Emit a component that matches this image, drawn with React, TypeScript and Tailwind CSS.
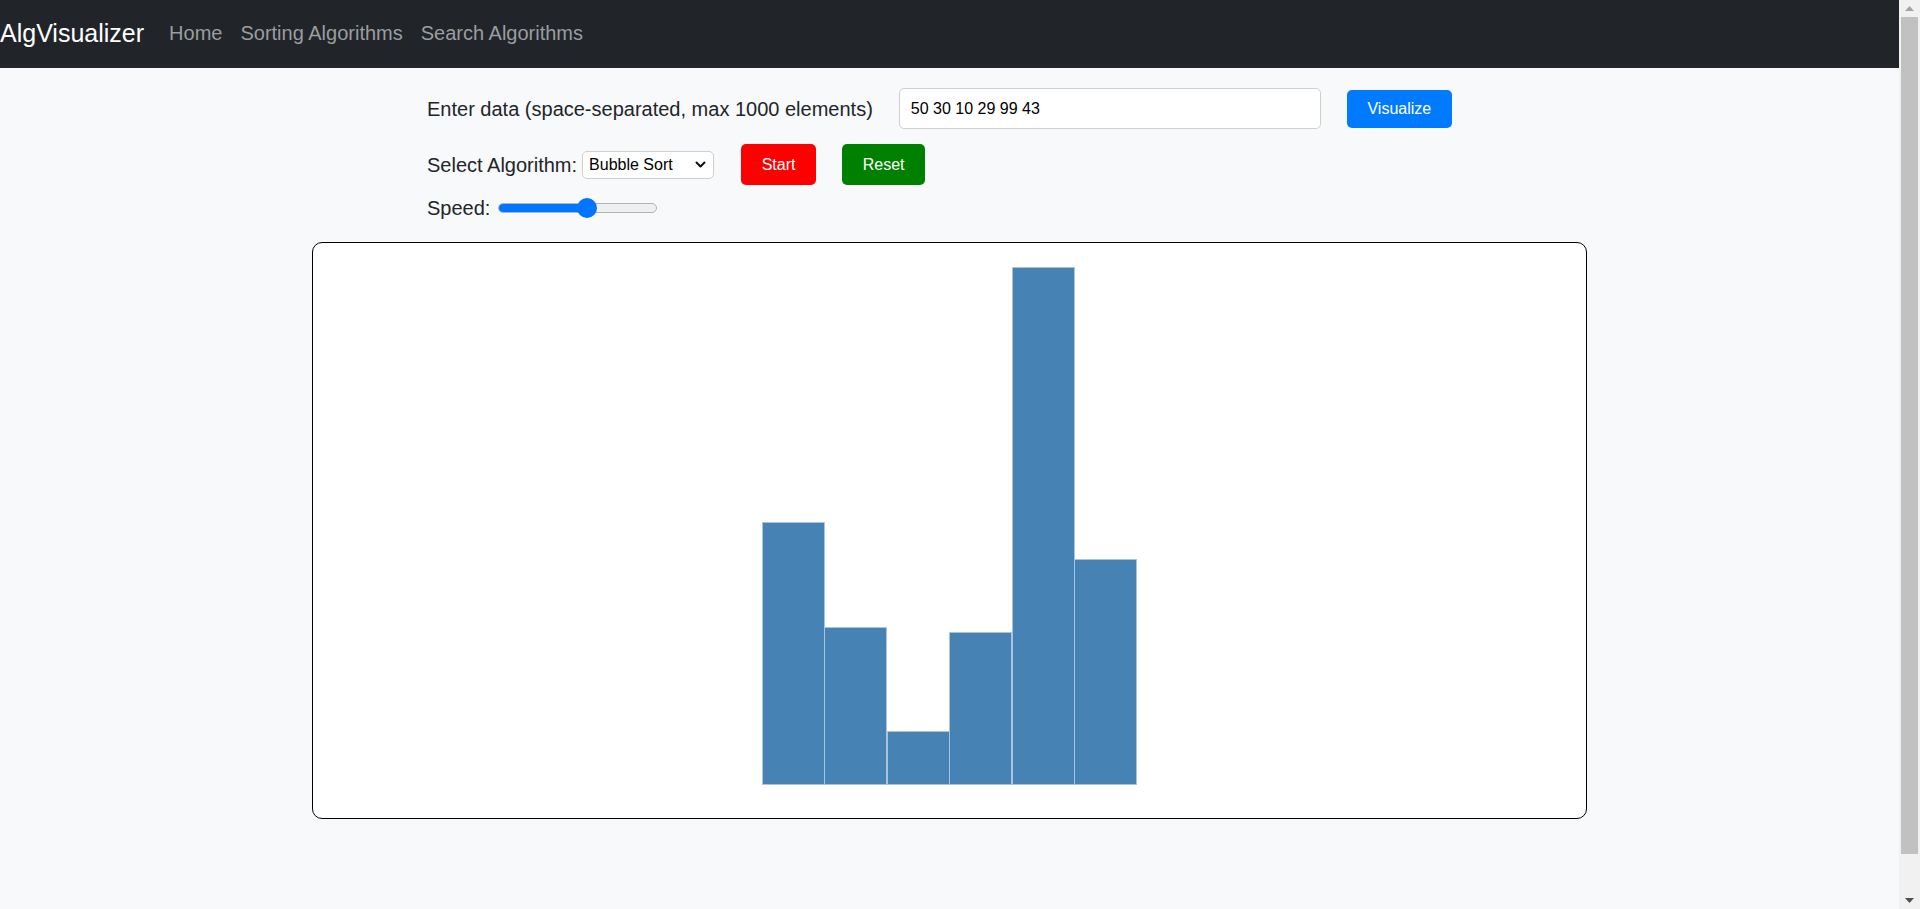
import React from 'react';

const data = [50, 30, 10, 29, 99, 43];
const maxHeight = 516;

const Navbar = () => (
  <nav className="h-[68px] bg-[#212529] flex items-center">
    <span className="text-[25px] text-white leading-none mr-[25px] -mt-[2px]">AlgVisualizer</span>
    <div className="flex items-center gap-[18px] text-[20px] text-[#9b9d9f] leading-none -mt-[2px]">
      <a href="#">Home</a>
      <a href="#">Sorting Algorithms</a>
      <a href="#">Search Algorithms</a>
    </div>
  </nav>
);

const Chevron = () => (
  <svg width="11" height="7" viewBox="0 0 11 7" fill="none" stroke="#111" strokeWidth="2" strokeLinecap="round" strokeLinejoin="round">
    <path d="M1.5 1.5 5.5 5.5 9.5 1.5" />
  </svg>
);

const SpeedSlider = () => (
  <div className="relative w-[159px] h-[20px] flex items-center">
    <div className="w-full h-[10px] rounded-full bg-[#efefef] border border-[#b2b2b2] overflow-hidden">
      <div className="h-full w-[89px] bg-[#0075ff]" />
    </div>
    <div className="absolute left-[79px] top-0 w-[20px] h-[20px] rounded-full bg-[#0075ff]" />
  </div>
);

const Controls = () => (
  <div className="pl-[115px] pt-[20px] text-[#212529] text-[20px]">
    <div className="flex items-center h-[41px]">
      <label className="mr-[26px]">Enter data (space-separated, max 1000 elements)</label>
      <input
        defaultValue="50 30 10 29 99 43"
        className="w-[422px] h-[41px] bg-white border border-[#cfcfcf] rounded-[5px] px-[11px] text-[16px] text-black outline-none"
      />
      <button className="ml-[26px] w-[105px] h-[38px] rounded-[5px] bg-[#007bff] text-white text-[16px]">Visualize</button>
    </div>
    <div className="flex items-center h-[41px] mt-[15px]">
      <label className="mr-[5px]">Select Algorithm:</label>
      <div className="w-[132px] h-[28px] bg-white border border-[#cfcfcf] rounded-[5px] flex items-center justify-between pl-[6px] pr-[7px] text-[16px] text-black">
        <span>Bubble Sort</span>
        <Chevron />
      </div>
      <button className="ml-[27px] w-[75px] h-[41px] rounded-[5px] bg-[#ff0000] text-white text-[16px]">Start</button>
      <button className="ml-[26px] w-[83px] h-[41px] rounded-[5px] bg-[#008000] text-white text-[16px]">Reset</button>
    </div>
    <div className="flex items-center h-[24px] mt-[11px]">
      <label className="mr-[8px]">Speed:</label>
      <SpeedSlider />
    </div>
  </div>
);

const Chart = () => {
  const max = Math.max(...data);
  return (
    <div className="mt-[22px] h-[577px] bg-white border border-black rounded-[10px] flex items-end justify-center pb-[34px]">
      <div className="flex items-end gap-[1.6px]">
        {data.map((v, i) => (
          <div
            key={i}
            className="w-[61px] bg-[#4682b4] outline outline-[0.5px] outline-[#a9c4dc]"
            style={{ height: `${(v / max) * maxHeight}px` }}
          />
        ))}
      </div>
    </div>
  );
};

const Scrollbar = () => (
  <div className="w-[21px] h-full bg-[#f1f1f1] flex flex-col items-center">
    <div className="h-[17px] flex items-center justify-center">
      <svg width="9" height="5" viewBox="0 0 9 5"><path d="M0 5 4.5 0 9 5Z" fill="#a3a3a3" /></svg>
    </div>
    <div className="w-[17px] flex-1 bg-[#c1c1c1] mb-[38px]" />
    <div className="h-[17px] flex items-center justify-center">
      <svg width="9" height="5" viewBox="0 0 9 5"><path d="M0 0 9 0 4.5 5Z" fill="#505050" /></svg>
    </div>
  </div>
);

export default function App() {
  return (
    <div className="h-[909px] flex bg-[#f8f9fa] overflow-hidden" style={{ fontFamily: '"Liberation Sans", Arial, sans-serif' }}>
      <div className="flex-1 min-h-[955px]">
        <Navbar />
        <div className="w-[1275px] mx-auto">
          <Controls />
          <Chart />
        </div>
      </div>
      <Scrollbar />
    </div>
  );
}
